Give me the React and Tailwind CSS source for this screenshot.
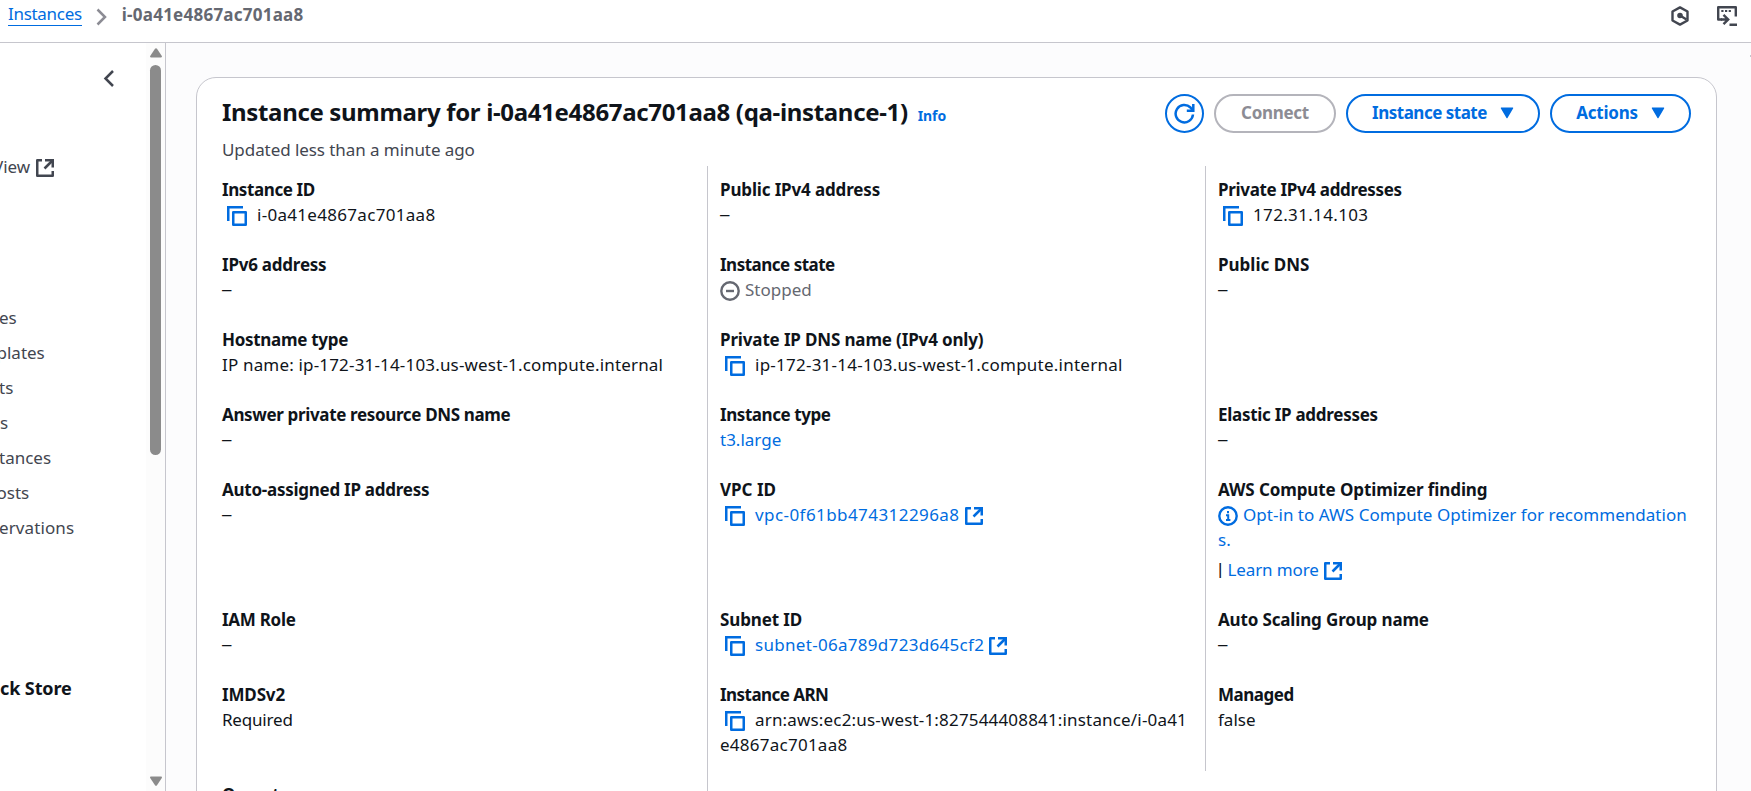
import React from "react";

function CopyIcon() {
  return (
    <svg className="ml-[5px] mr-2.5 mt-[3px] h-5 w-5 shrink-0" viewBox="0 0 20 20" fill="none" stroke="#006ce0" strokeWidth="2.5">
      <path d="M1.25 15V1.25H16" />
      <path d="M6.25 6.25h12.5v12.5H6.25z" strokeLinejoin="round" />
    </svg>
  );
}

function ExternalIcon() {
  return (
    <svg className="mt-[3px] h-[18px] w-[18px] shrink-0" viewBox="0 0 18 18" fill="none" stroke="currentColor" strokeWidth="2.5">
      <path d="M6 1.25H1.25v15.5h15.5V12" strokeLinejoin="round" />
      <path d="M9 1.25h7.75V8.5" />
      <path d="M16.5 1.5 8.5 9.5" />
    </svg>
  );
}

function StoppedIcon() {
  return (
    <svg className="mr-[5px] mt-[3px] h-5 w-5 shrink-0" viewBox="0 0 20 20" fill="none" stroke="#656871" strokeWidth="2.4">
      <circle cx="10" cy="10" r="8.7" />
      <path d="M6 10h8" />
    </svg>
  );
}

function InfoIcon() {
  return (
    <svg className="mr-[5px] mt-[3px] h-5 w-5 shrink-0" viewBox="0 0 20 20" fill="none" stroke="#006ce0" strokeWidth="2.4">
      <circle cx="10" cy="10" r="8.7" />
      <path d="M10 5v2.2M8 9.3h2.2v5M8 14h4.400" strokeWidth="2" />
    </svg>
  );
}

function Caret() {
  return (
    <svg className="h-3 w-3.5" viewBox="0 0 14 12" fill="currentColor">
      <path d="M1.4.5h11.2c.5 0 .8.6.5 1L7.5 11c-.2.4-.8.4-1 0L.9 1.5C.6 1.1.9.5 1.4.5z" />
    </svg>
  );
}

function Dash() {
  return <span className="font-['Liberation_Sans']">–</span>;
}

function Label({ tight = "", children }) {
  return <div className={"whitespace-nowrap font-bold " + tight}>{children}</div>;
}

function Field({ label, tight, children }) {
  return (
    <div>
      <Label tight={tight}>{label}</Label>
      <div className="flex h-[25px] items-center whitespace-nowrap">{children}</div>
    </div>
  );
}

const rowHeights =
  "grid h-[750px] grid-rows-[75px_75px_75px_75px_130px_75px_100px_75px] pt-[11px]";

const sideItems = [
  { text: "es", shift: "-ml-px" },
  { text: "plates", shift: "-ml-[3.5px]" },
  { text: "ts", shift: "-ml-px" },
  { text: "s", shift: "" },
  { text: "tances", shift: "-ml-px" },
  { text: "osts", shift: "-ml-[3.5px]" },
  { text: "ervations", shift: "-ml-px tracking-[0.1px]" },
];

export default function App() {
  return (
    <div className="flex h-[791px] w-[1751px] flex-col overflow-hidden bg-white font-['Noto_Sans',sans-serif] text-[17px] leading-[25px] text-[#0f141a]">
      <header className="flex h-[43px] shrink-0 items-start justify-between border-b border-[#c6c6cd] pl-2 pr-3.5">
        <div className="flex h-[29px] items-center">
          <a className="h-[23px] border-b border-[#006ce0] leading-[22px] tracking-[-0.3px] text-[#006ce0]">Instances</a>
          <svg className="ml-3.5 mt-1 h-[18px] w-3" viewBox="0 0 12 18" fill="none" stroke="#8c8c94" strokeWidth="2.5">
            <path d="M1.5 1.5 9 9l-7.5 7.5" />
          </svg>
          <span className="ml-3.5 font-bold tracking-[0.24px] text-[#656871]">i-0a41e4867ac701aa8</span>
        </div>
        <div className="flex items-center gap-7 pt-1.5 text-[#424650]">
          <svg className="h-5 w-[18px]" viewBox="0 0 18 20" fill="none" stroke="currentColor" strokeWidth="2.4">
            <path d="M9 1.4 16.5 5.500v9L9 18.600 1.500 14.500v-9z" strokeLinejoin="round" />
            <path d="M9 9.500l6.500 4" />
            <circle cx="9" cy="9.500" r="1.600" fill="currentColor" />
          </svg>
          <svg className="h-5 w-5" viewBox="0 0 20 20" fill="none" stroke="currentColor" strokeWidth="2.4">
            <path d="M5 13.500H1.200V1.200h17.600V10.500" strokeLinejoin="round" />
            <path d="M4.300 5h2.200M8 5h2.200M11.700 5h2.200" strokeWidth="2" />
            <path d="M4 13.500h7M6.500 8.800l4.700 4.700-4.700 4.700M12.500 18.800H20" />
          </svg>
        </div>
      </header>

      <div className="flex min-h-0 flex-1">
        <nav className="flex w-[166px] shrink-0 border-r border-[#c6c6cd]">
          <div className="flex w-[146px] flex-col overflow-hidden whitespace-nowrap text-[#424650]">
            <svg className="ml-[103px] mt-[27px] h-[17px] w-3 shrink-0" viewBox="0 0 12 17" fill="none" stroke="currentColor" strokeWidth="2.500">
              <path d="M10 1 2.500 8.500 10 16" />
            </svg>
            <div className="mt-[67px] flex h-[25px] items-center gap-1.5">
              <span className="-ml-[7px]">View</span>
              <ExternalIcon />
            </div>
            <div className="mt-[126px] flex flex-col gap-2.5">
              {sideItems.map((item) => (
                <span key={item.text} className={item.shift}>{item.text}</span>
              ))}
            </div>
            <div className="mt-[136px] text-[18px] font-bold tracking-[-0.1px] text-[#0f141a]">ck Store</div>
          </div>
          <div className="flex flex-1 flex-col items-center justify-between bg-[#fcfcfc] pb-[5px] pt-[5px]">
            <div className="flex flex-col items-center gap-[7px]">
              <svg className="h-2.5 w-3" viewBox="0 0 12 10" fill="#8b8b8b">
                <path d="M7 .8 11.800 8c.4.700 0 1.500-.9 1.500H1.100C.2 9.500-.2 8.700.2 8L5 .8c.5-.7 1.500-.7 2 0z" />
              </svg>
              <div className="h-[390px] w-[11px] rounded-full bg-[#8b8b8b]" />
            </div>
            <svg className="h-2.5 w-3" viewBox="0 0 12 10" fill="#8b8b8b">
              <path d="M5 9.200.2 2C-.2 1.300.2.500 1.100.500h9.800c.9 0 1.300.8.9 1.500L7 9.200c-.5.700-1.500.700-2 0z" />
            </svg>
          </div>
        </nav>

        <main className="flex flex-1 items-start justify-between bg-[#fcfcfd] pl-[30px]">
          <section className="mt-[34px] h-[800px] w-[1521px] shrink-0 rounded-t-[20px] border border-[#c6c6cd] bg-white">
            <div className="flex h-[88px] justify-between px-[25px] pt-4">
              <div>
                <div className="flex h-[35px] items-center">
                  <h1 className="whitespace-nowrap text-[24px] font-bold tracking-[-0.33px]">Instance summary for i-0a41e4867ac701aa8 (qa-instance-1)</h1>
                  <a className="ml-2.5 mt-[7px] text-[14px] font-bold tracking-[-0.1px] text-[#006ce0]">Info</a>
                </div>
                <div className="mt-2 tracking-[-0.07px] text-[#424650]">Updated less than a minute ago</div>
              </div>
              <div className="flex gap-2.5 font-bold text-[#006ce0]">
                <button className="flex h-[39px] w-[39px] items-center justify-center rounded-full border-2 border-[#006ce0]">
                  <svg className="h-[21px] w-[21px]" viewBox="0 0 21 21" fill="none" stroke="currentColor" strokeWidth="2.500">
                    <path d="M19 11.500a8.700 8.700 0 1 1-2.500-7l2 2.500" />
                    <path d="M19.300 1v6.700h-6.500" />
                  </svg>
                </button>
                <button className="flex h-[39px] w-[122px] items-center justify-center rounded-full border-2 border-[#b4b4bb] pb-0.5 tracking-[-0.3px] text-[#8c8c94]">Connect</button>
                <button className="flex h-[39px] w-[194px] items-center justify-center gap-[13px] rounded-full border-2 border-[#006ce0] pb-0.5 tracking-[-0.5px]">
                  Instance state <Caret />
                </button>
                <button className="flex h-[39px] w-[141px] items-center justify-center gap-[13px] rounded-full border-2 border-[#006ce0] pb-0.5 tracking-[-0.24px]">
                  Actions <Caret />
                </button>
              </div>
            </div>

            <div className="flex items-start">
              <div className={"w-[510px] pl-[25px] " + rowHeights}>
                <Field label="Instance ID" tight="tracking-[-0.4px]"><CopyIcon /><span className="tracking-[0.3px]">i-0a41e4867ac701aa8</span></Field>
                <Field label="IPv6 address" tight="tracking-[-0.23px]"><Dash /></Field>
                <Field label="Hostname type" tight="tracking-[-0.3px]"><span className="tracking-[0.17px]">IP name: ip-172-31-14-103.us-west-1.compute.internal</span></Field>
                <Field label="Answer private resource DNS name" tight="tracking-[-0.35px]"><Dash /></Field>
                <Field label="Auto-assigned IP address" tight="tracking-[-0.26px]"><Dash /></Field>
                <Field label="IAM Role" tight="tracking-[-0.28px]"><Dash /></Field>
                <Field label="IMDSv2" tight="tracking-[-0.15px]"><span className="tracking-[-0.2px]">Required</span></Field>
                <Field label="Operator" tight="tracking-[-0.3px]"><Dash /></Field>
              </div>
              <div className={"w-[498px] border-l border-[#c6c6cd] pl-3 " + rowHeights}>
                <Field label="Public IPv4 address" tight="tracking-[-0.15px]"><Dash /></Field>
                <Field label="Instance state" tight="tracking-[-0.5px]"><StoppedIcon /><span className="text-[#656871]">Stopped</span></Field>
                <Field label="Private IP DNS name (IPv4 only)" tight="tracking-[-0.15px]"><CopyIcon /><span className="tracking-[0.24px]">ip-172-31-14-103.us-west-1.compute.internal</span></Field>
                <Field label="Instance type" tight="tracking-[-0.43px]"><a className="text-[#006ce0]">t3.large</a></Field>
                <Field label="VPC ID">
                  <CopyIcon /><a className="flex items-center gap-[5.5px] tracking-[0.43px] text-[#006ce0]">vpc-0f61bb474312296a8 <ExternalIcon /></a>
                </Field>
                <Field label="Subnet ID" tight="tracking-[-0.12px]">
                  <CopyIcon /><a className="flex items-center gap-[5px] tracking-[0.3px] text-[#006ce0]">subnet-06a789d723d645cf2 <ExternalIcon /></a>
                </Field>
                <div>
                  <Label tight="tracking-[-0.54px]">Instance ARN</Label>
                  <div className="flex items-center whitespace-nowrap"><CopyIcon /><span className="tracking-[0.17px]">arn:aws:ec2:us-west-1:827544408841:instance/i-0a41</span></div>
                  <div className="tracking-[0.25px]">e4867ac701aa8</div>
                </div>
              </div>
              <div className="h-[605px] w-[511px] border-l border-[#c6c6cd]">
                <div className={"pl-3 " + rowHeights}>
                  <Field label="Private IPv4 addresses" tight="tracking-[-0.33px]"><CopyIcon /><span className="tracking-[0.34px]">172.31.14.103</span></Field>
                  <Field label="Public DNS"><Dash /></Field>
                  <div />
                  <Field label="Elastic IP addresses" tight="tracking-[-0.28px]"><Dash /></Field>
                  <div>
                    <Label tight="tracking-[-0.1px]">AWS Compute Optimizer finding</Label>
                    <div className="flex items-center whitespace-nowrap text-[#006ce0]"><InfoIcon /><span className="tracking-[0.03px]">Opt-in to AWS Compute Optimizer for recommendation</span></div>
                    <div className="text-[#006ce0]">s.</div>
                    <div className="mt-[5px] flex items-center gap-[5px]">
                      <span className="font-['Liberation_Sans']">|</span>
                      <a className="flex items-center gap-[5px] tracking-[-0.1px] text-[#006ce0]">Learn more <ExternalIcon /></a>
                    </div>
                  </div>
                  <Field label="Auto Scaling Group name" tight="tracking-[-0.15px]"><Dash /></Field>
                  <Field label="Managed" tight="tracking-[-0.48px]">false</Field>
                </div>
              </div>
            </div>
          </section>
          <div className="mt-3 h-0.5 w-px bg-[#c6c6cd]" />
        </main>
      </div>
    </div>
  );
}
